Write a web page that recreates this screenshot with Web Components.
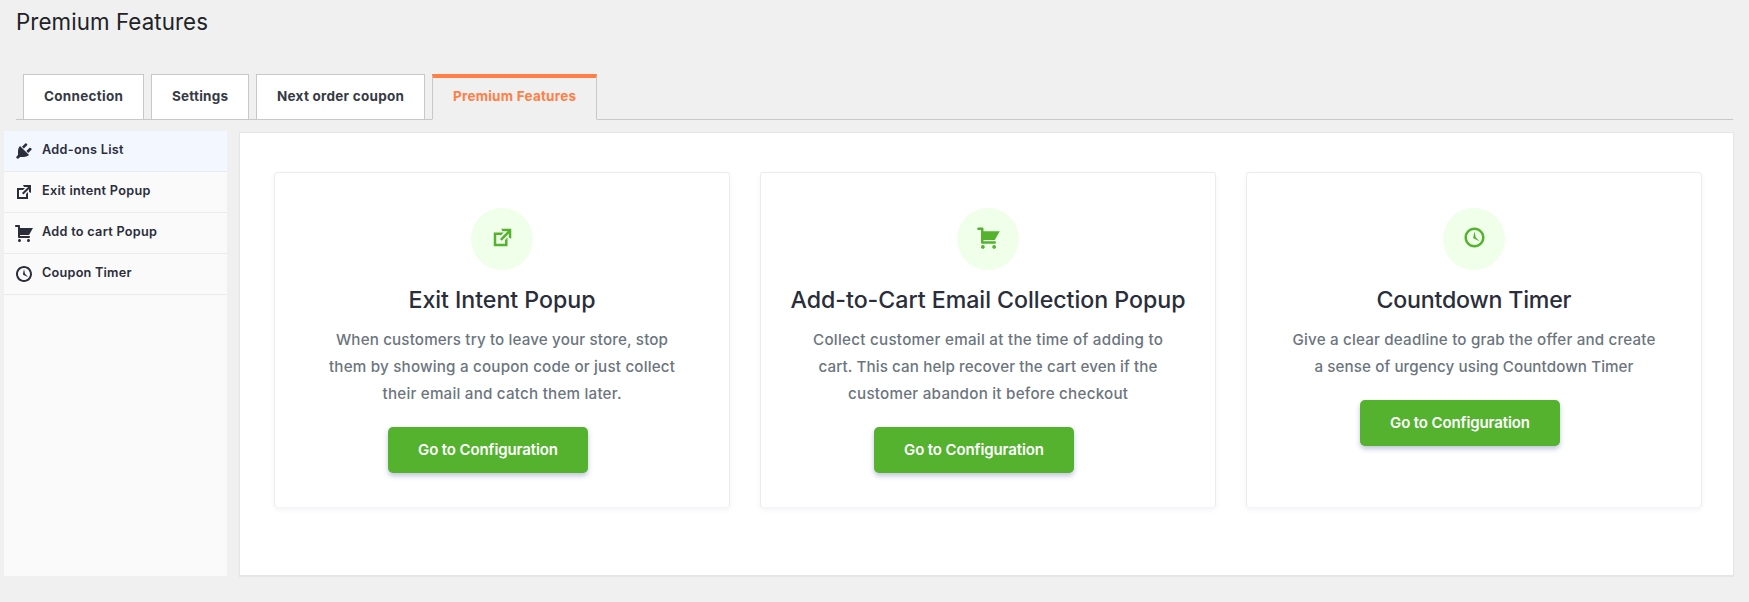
<!DOCTYPE html>
<html lang="en">
<head>
<meta charset="utf-8">
<title>Premium Features</title>
<style>
body{margin:0;background:#f0f0f0;font-family:Inter,"Open Sans",sans-serif;color:#1d2327}
</style>
</head>
<body>
<premium-page></premium-page>
<script>
const define = (name, html, setup) => {
  const t = document.createElement('template');
  t.innerHTML = html;
  customElements.define(name, class extends HTMLElement {
    constructor() {
      super();
      this.attachShadow({mode: 'open'}).append(t.content.cloneNode(true));
    }
    connectedCallback() { if (setup) setup(this, this.shadowRoot); }
  });
};

/* One line of text whose tracking is set so that it takes a given width. */
define('tracked-text', `<style>
:host{display:inline-block;white-space:nowrap;vertical-align:top}
span{display:block}
</style><span><slot></slot></span>`, (el) => {
  const w = parseFloat(el.getAttribute('width'));
  const n = el.textContent.length;
  el.style.letterSpacing = '0px';
  el.style.width = 'max-content';
  const natural = el.getBoundingClientRect().width;
  el.style.letterSpacing = ((w - natural) / (n - 1)).toFixed(4) + 'px';
  el.style.width = w + 'px';
});

const ICONS = {
  plug: 'M13.11 4.36L9.87 7.6 8 5.73l3.24-3.24c.35-.34 1.05-.2 1.56.32.52.51.66 1.21.31 1.55zm-8 1.77l.91-1.12 9.01 9.01-1.19.84c-.71.71-2.63 1.16-3.82 1.16H6.14L4.9 17.26c-.59.59-1.54.59-2.12 0-.59-.58-.59-1.53 0-2.12l1.24-1.24v-3.88c0-1.13.4-3.19 1.09-3.89zm7.26 3.97l3.24-3.24c.34-.35 1.04-.21 1.55.31.52.51.66 1.21.31 1.55l-3.24 3.25z',
  external: 'M9 3h8v8l-2-1V6.92l-5.6 5.59-1.41-1.41L14.08 5H10zm3 12v-3l2-2v7H3V6h8L9 8H5v7h7z',
  cart: 'M6 13h9c.55 0 1 .45 1 1s-.45 1-1 1H5c-.55 0-1-.45-1-1V4H2c-.55 0-1-.45-1-1s.45-1 1-1h3c.55 0 1 .45 1 1v2h13l-4 7H6v1zm-.5 3c.83 0 1.5.67 1.5 1.5S6.33 19 5.5 19 4 18.33 4 17.5 4.67 16 5.5 16zm9 0c.83 0 1.5.67 1.5 1.5s-.67 1.5-1.5 1.5-1.5-.67-1.5-1.5.67-1.5 1.5-1.5z',
  clock: 'M10 2c4.42 0 8 3.58 8 8s-3.58 8-8 8-8-3.58-8-8 3.58-8 8-8zm0 14c3.31 0 6-2.69 6-6s-2.69-6-6-6-6 2.69-6 6 2.69 6 6 6zm-.71-5.29c.07.05.14.1.23.15l-.02.02L14 13l-3.03-3.19L10 5l-.97 4.81h.01c0 .02-.01.05-.02.09S9 9.97 9 10c0 .28.1.52.29.71z'
};
define('dash-icon', `<style>
:host{display:block;width:20px;height:20px;flex:none}
svg{display:block;width:100%;height:100%;fill:currentColor}
</style><svg viewBox="0 0 20 20"><path/></svg>`, (el, root) => {
  root.querySelector('path').setAttribute('d', ICONS[el.getAttribute('name')] || '');
});

define('nav-tab', `<style>
:host{display:block;box-sizing:border-box;height:46px;border:1px solid #c8c8c8;background:#fff;color:#363a44;
 font-size:13.5px;font-weight:700;line-height:20px;padding:11px 20px 0}
:host([active]){background:#f0f0f0;border-top:4px solid #ff7f47;border-bottom-color:#f0f0f0;color:#ff7f47;padding-top:8px}
</style><slot></slot>`);

define('tab-bar', `<style>
:host{display:flex;gap:7px;height:45px;border-bottom:1px solid #c8c8c8;padding-left:7px}
</style><slot></slot>`);

define('side-item', `<style>
:host{display:flex;height:40px;border-bottom:1px solid #ebebeb;align-items:center;gap:8px;padding-left:10px;color:#2a2d3a;
 font-size:12.7px;font-weight:600;line-height:20px}
:host([active]){background:#f3f7ff}
.t{margin-top:-3px}
</style><dash-icon></dash-icon><div class="t"><slot></slot></div>`, (el, root) => {
  const i = root.querySelector('dash-icon');
  i.setAttribute('name', el.getAttribute('icon'));
  i.replaceWith(i.cloneNode(true));
});

define('feature-card', `<style>
:host{display:flex;flex-direction:column;align-items:center;box-sizing:border-box;width:456px;height:336px;background:#fff;
 border:1px solid #ececee;border-bottom-color:#f4f4f8;border-radius:4px;box-shadow:0 2px 5px rgba(60,70,110,.06);padding-top:35px}
.c{width:62px;height:62px;border-radius:50%;background:#efffe9;color:#54b22f;display:flex;justify-content:center;box-sizing:border-box;padding:17px 0 0 1px}
dash-icon{width:25px;height:25px}
h2{margin:15px 0 0;font-size:23.2px;font-weight:500;line-height:30px;color:#2a2d3a}
.d{display:flex;flex-direction:column;align-items:center;margin-top:11px;font-size:15.2px;font-weight:450;line-height:27px;color:#6c757d}
.b{width:200px;height:46px;box-sizing:border-box;padding-left:30px;margin:20px 28px 0 0;border-radius:5px;background:#54b22f;color:#fff;
 font-size:15px;font-weight:600;line-height:46px;box-shadow:0 3px 5px rgba(50,70,130,.3)}
</style>
<div class="c"><dash-icon></dash-icon></div>
<h2><slot name="title"></slot></h2>
<div class="d"><slot></slot></div>
<div class="b"><tracked-text width="140">Go to Configuration</tracked-text></div>`, (el, root) => {
  const i = root.querySelector('dash-icon');
  i.setAttribute('name', el.getAttribute('icon'));
  i.replaceWith(i.cloneNode(true));
});

define('premium-page', `<style>
:host{display:flex;flex-direction:column;height:602px;box-sizing:border-box}
h1{margin:7px 0 0 16px;font-size:22.3px;line-height:30px;font-weight:400;height:30px}
tab-bar{margin:37px 16px 0}
.main{display:flex;gap:12px;margin:11px 15px 0 4px;align-items:flex-start}
.side{width:223px;height:445px;background:#fafafa;box-sizing:border-box}
.panel{flex:1;margin-top:1px;height:444px;box-sizing:border-box;background:#fff;border:1px solid #e5e5e5;box-shadow:0 1px 1px rgba(0,0,0,.04);
 display:flex;align-items:flex-start;gap:30px;padding:39px 0 0 34px}
</style>
<h1><tracked-text width="192">Premium Features</tracked-text></h1>
<tab-bar>
 <nav-tab><tracked-text width="79">Connection</tracked-text></nav-tab>
 <nav-tab><tracked-text width="56">Settings</tracked-text></nav-tab>
 <nav-tab><tracked-text width="127">Next order coupon</tracked-text></nav-tab>
 <nav-tab active><tracked-text width="123">Premium Features</tracked-text></nav-tab>
</tab-bar>
<div class="main">
 <div class="side">
  <side-item active icon="plug"><tracked-text width="81.5">Add-ons List</tracked-text></side-item>
  <side-item icon="external"><tracked-text width="108.5">Exit intent Popup</tracked-text></side-item>
  <side-item icon="cart"><tracked-text width="115">Add to cart Popup</tracked-text></side-item>
  <side-item icon="clock"><tracked-text width="89.5">Coupon Timer</tracked-text></side-item>
 </div>
 <div class="panel">
  <feature-card icon="external">
   <tracked-text slot="title" width="187">Exit Intent Popup</tracked-text>
   <tracked-text width="332">When customers try to leave your store, stop</tracked-text>
   <tracked-text width="346">them by showing a coupon code or just collect</tracked-text>
   <tracked-text width="239">their email and catch them later.</tracked-text>
  </feature-card>
  <feature-card icon="cart">
   <tracked-text slot="title" width="395">Add-to-Cart Email Collection Popup</tracked-text>
   <tracked-text width="350">Collect customer email at the time of adding to</tracked-text>
   <tracked-text width="339">cart. This can help recover the cart even if the</tracked-text>
   <tracked-text width="280">customer abandon it before checkout</tracked-text>
  </feature-card>
  <feature-card icon="clock">
   <tracked-text slot="title" width="195">Countdown Timer</tracked-text>
   <tracked-text width="363">Give a clear deadline to grab the offer and create</tracked-text>
   <tracked-text width="319">a sense of urgency using Countdown Timer</tracked-text>
  </feature-card>
 </div>
</div>`);
</script>
</body>
</html>
